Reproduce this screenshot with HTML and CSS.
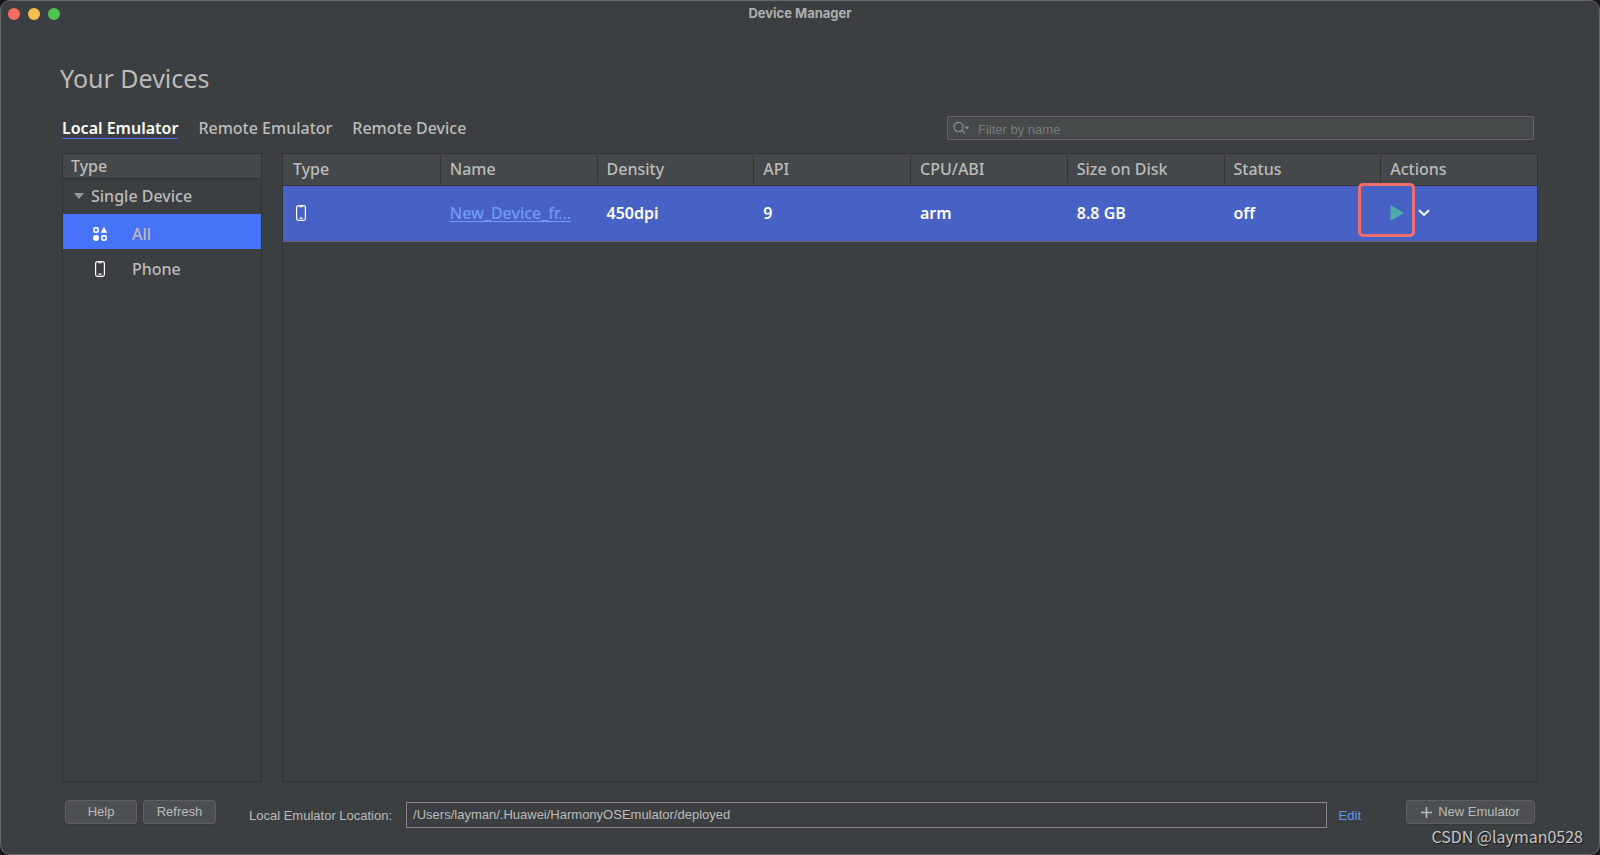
FILE: index.html
```html
<!DOCTYPE html>
<html lang="en">
<head>
<meta charset="utf-8">
<meta name="viewport" content="width=device-width, initial-scale=1">
<title>Device Manager</title>
<link rel="stylesheet" href="styles.css">
</head>
<body>
<div class="window">
  <header class="titlebar">
    <div class="lights">
      <button class="light light-close" type="button" aria-label="Close"></button>
      <button class="light light-min" type="button" aria-label="Minimize"></button>
      <button class="light light-zoom" type="button" aria-label="Zoom"></button>
    </div>
    <span class="titlebar-text">Device Manager</span>
  </header>

  <main class="content">
    <h1 class="heading">Your Devices</h1>

    <div class="toolbar">
      <nav class="tabs">
        <a class="tab tab-active" href="#local">Local Emulator</a>
        <a class="tab" href="#remote">Remote Emulator</a>
        <a class="tab" href="#device">Remote Device</a>
      </nav>
      <label class="search">
        <svg class="search-icon" width="18" height="14" viewBox="0 0 18 14" aria-hidden="true">
          <circle cx="5.500" cy="6" r="4.600" fill="none" stroke="#8b8e90" stroke-width="1.200"/>
          <path d="M8.800 9.300l3 3" stroke="#8b8e90" stroke-width="1.500"/>
          <path d="M11.500 5.500h5l-2.500 3z" fill="#8b8e90"/>
        </svg>
        <input class="search-input" type="text" placeholder="Filter by name" aria-label="Filter by name">
      </label>
    </div>

    <div class="panels">
      <aside class="sidebar">
        <div class="sidebar-head">Type</div>
        <div class="group">
          <svg width="10" height="6" viewBox="0 0 10 6" aria-hidden="true"><path d="M0 0h10L5 6z" fill="#999"/></svg>
          Single Device
        </div>
        <ul class="types">
          <li><button class="type type-selected" type="button">
            <svg width="16" height="16" viewBox="0 0 16 16" aria-hidden="true">
              <rect x="1.900" y="1.900" width="4.200" height="4.200" rx="1" fill="none" stroke="#fff" stroke-width="1.600"/>
              <path d="M12 .8l3 5.400q.2.600-.4.600H9.400q-.6 0-.4-.6z" fill="#fff"/>
              <circle cx="4" cy="12" r="3" fill="#fff"/>
              <rect x="9.900" y="9.900" width="4.200" height="4.200" rx="1" fill="none" stroke="#fff" stroke-width="1.600"/>
            </svg>
            All</button></li>
          <li><button class="type" type="button">
            <svg width="16" height="16" viewBox="0 0 16 16" aria-hidden="true">
              <rect x="3.600" y=".6" width="8.800" height="14.800" rx="1.800" fill="none" stroke="#fff" stroke-width="1.200"/>
              <path d="M5.500 1.200h5l-.8 1H6.300zM6.500 12.500h3v1.200h-3z" fill="#fff"/>
            </svg>
            Phone</button></li>
        </ul>
      </aside>

      <section class="devices">
        <table class="device-table">
          <thead>
            <tr><th>Type</th><th>Name</th><th>Density</th><th>API</th><th>CPU/ABI</th><th>Size on Disk</th><th>Status</th><th>Actions</th></tr>
          </thead>
          <tbody>
            <tr>
              <td><svg width="16" height="16" viewBox="0 0 16 16" role="img" aria-label="Phone">
                <rect x="3.600" y=".6" width="8.800" height="14.800" rx="1.800" fill="none" stroke="#fff" stroke-width="1.200"/>
                <path d="M5.500 1.200h5l-.8 1H6.300zM6.500 12.500h3v1.200h-3z" fill="#fff"/>
              </svg></td>
              <td><a class="device-link" href="#device-1">New_Device_fr...</a></td>
              <td>450dpi</td>
              <td>9</td>
              <td>arm</td>
              <td>8.8 GB</td>
              <td>off</td>
              <td>
                <div class="actions">
                  <button class="action action-run" type="button" aria-label="Run">
                    <svg width="14" height="16" viewBox="0 0 14 16" aria-hidden="true"><path d="M.5.800Q.5.200 1.200.6L13 7.400q.8.600 0 1.200L1.200 15.400Q.5 15.800.5 15.200z" fill="#4dada9"/></svg>
                    <span class="highlight"></span>
                  </button>
                  <button class="action" type="button" aria-label="More actions">
                    <svg width="12" height="8" viewBox="0 0 12 8" aria-hidden="true"><path d="M1 1.300l5 4.700 5-4.700" fill="none" stroke="#fff" stroke-width="2"/></svg>
                  </button>
                </div>
              </td>
            </tr>
          </tbody>
        </table>
      </section>
    </div>

    <footer class="footer">
      <div class="footer-buttons">
        <button class="button button-help" type="button">Help</button>
        <button class="button button-refresh" type="button">Refresh</button>
      </div>
      <div class="location">
        <label class="location-label" for="location">Local Emulator Location:</label>
        <input class="location-input" id="location" type="text" value="/Users/layman/.Huawei/HarmonyOSEmulator/deployed" readonly>
        <a class="edit" href="#edit">Edit</a>
      </div>
      <button class="button button-new" type="button">
        <svg width="11" height="11" viewBox="0 0 11 11" aria-hidden="true"><path d="M5.500 0v11M0 5.500h11" stroke="#bbb" stroke-width="1.600"/></svg>
        New Emulator</button>
    </footer>
  </main>
  <div class="watermark">CSDN @layman0528</div>
</div>
</body>
</html>
```
FILE: styles.css
```css
* {
  box-sizing: border-box;
}

body {
  margin: 0;
  background: #17191c;
  color: #bbbbbb;
  font-family: "Noto Sans", "Open Sans", sans-serif;
  font-size: 16px;
  font-weight: 500;
}

button,
input {
  font: inherit;
  color: inherit;
}

svg {
  display: block;
  flex: none;
}

.window {
  position: relative;
  display: flex;
  flex-direction: column;
  min-height: 100vh;
  background: #3c3f41;
  border: 1px solid #66696b;
  border-radius: 10px;
}

.titlebar {
  display: grid;
  grid-template-columns: 1fr auto 1fr;
  align-items: center;
  height: 26px;
  padding: 0 7px;
}

.lights {
  display: flex;
  gap: 8px;
}

.light {
  width: 12px;
  height: 12px;
  padding: 0;
  border: 0;
  border-radius: 50%;
}

.light-close { background: #f46d5f; }
.light-min { background: #f6be4f; }
.light-zoom { background: #4bc552; }

.titlebar-text {
  padding-bottom: 2px;
  font: 700 13px/16px Inter, sans-serif;
  color: #acaeaf;
}

.content {
  display: flex;
  flex: 1;
  flex-direction: column;
  padding: 33px 61px 26px;
}

.heading {
  margin: 0 0 20px -2px;
  font-size: 25px;
  font-weight: 400;
  line-height: 36px;
}

.toolbar {
  display: flex;
  align-items: center;
  justify-content: space-between;
  margin-bottom: 13px;
  padding-right: 4px;
}

.tabs {
  display: flex;
  gap: 20px;
  line-height: 20px;
}

.tab {
  color: inherit;
  text-decoration: none;
  border-bottom: 1px solid transparent;
}

.tab-active {
  color: #ffffff;
  font-weight: 600;
  border-color: #4a71f5;
}

.search {
  display: flex;
  flex: 0 1 587px;
  align-items: center;
  gap: 7px;
  height: 24px;
  padding: 0 5px;
  background: #45494a;
  border: 1px solid #646464;
  border-radius: 2px;
}

.search-input {
  flex: 1;
  min-width: 0;
  padding: 3px 0 0;
  border: 0;
  outline: 0;
  background: none;
  font: 13px/18px "Liberation Sans", Arial, sans-serif;
}

.search-input::placeholder {
  color: #787b7c;
  opacity: 1;
}

.panels {
  display: flex;
  flex: 1;
  gap: 20px;
}

.sidebar {
  flex: 0 0 200px;
  border: 1px solid #313335;
}

.sidebar-head {
  height: 25px;
  padding: 0 8px;
  line-height: 24px;
  background: #45484a;
  border-bottom: 1px solid #313335;
}

.group {
  display: flex;
  align-items: center;
  gap: 7px;
  height: 35px;
  padding: 0 0 1px 11px;
}

.types {
  margin: 0;
  padding: 0;
  list-style: none;
}

.type {
  display: flex;
  align-items: center;
  gap: 24px;
  width: 100%;
  height: 35px;
  padding: 5px 0 0 29px;
  border: 0;
  background: none;
  text-align: left;
}

.type-selected {
  background: #4673fa;
}

.devices {
  flex: 1;
  border: 1px solid #313335;
}

.device-table {
  width: 100%;
  table-layout: fixed;
  border-collapse: collapse;
}

.device-table th {
  height: 31px;
  padding: 0 0 0 10px;
  font-weight: 500;
  text-align: left;
  background: #45484a;
  border-bottom: 1px solid #313335;
}

.device-table th + th {
  background: linear-gradient(#313335, #313335) left center / 1px 28px no-repeat #45484a;
}

.device-table td {
  height: 56px;
  padding: 0 0 1px 10px;
  color: #ffffff;
  font-weight: 600;
  background: #4861c5;
  border-bottom: 1px solid #646464;
}

.device-link {
  color: #6f9af6;
  font-weight: 500;
  text-underline-offset: 2px;
}

.actions {
  display: flex;
  align-items: center;
  gap: 14px;
  padding-top: 1px;
}

.action {
  position: relative;
  padding: 0;
  border: 0;
  background: none;
}

.highlight {
  position: absolute;
  top: -22px;
  right: -11px;
  width: 57px;
  height: 54px;
  border: 3px solid #f26e6c;
  border-radius: 5px;
}

.footer {
  display: flex;
  align-items: flex-start;
  gap: 33px;
  padding: 18px 3px 0;
  font: 13px/18px "Liberation Sans", Arial, sans-serif;
}

.footer-buttons {
  display: flex;
  gap: 6px;
}

.button {
  display: flex;
  align-items: center;
  justify-content: center;
  gap: 6px;
  height: 24px;
  padding: 0;
  background: #4c5052;
  border: 1px solid #5e6060;
  border-radius: 3px;
  box-shadow: 0 1px 1px #36393a;
}

.button-help { width: 72px; }
.button-refresh { width: 73px; }

.button-new {
  width: 129px;
  margin-left: 12px;
}

.location {
  display: flex;
  flex: 1;
  align-items: center;
  gap: 12px;
  padding-top: 2px;
}

.location-label,
.edit {
  padding-top: 2px;
}

.location-input {
  flex: 1;
  min-width: 0;
  height: 26px;
  margin-left: 2px;
  padding: 0 6px 1px;
  background: none;
  border: 1px solid #868686;
  outline: 0;
}

.edit {
  color: #6495f0;
  text-decoration: none;
}

.watermark {
  position: absolute;
  right: 16px;
  bottom: 8px;
  color: #c6c7c8;
  font: 16px/20px "Noto Sans CJK SC", sans-serif;
  text-shadow: 1px 1px 1px #17191c;
}
```
